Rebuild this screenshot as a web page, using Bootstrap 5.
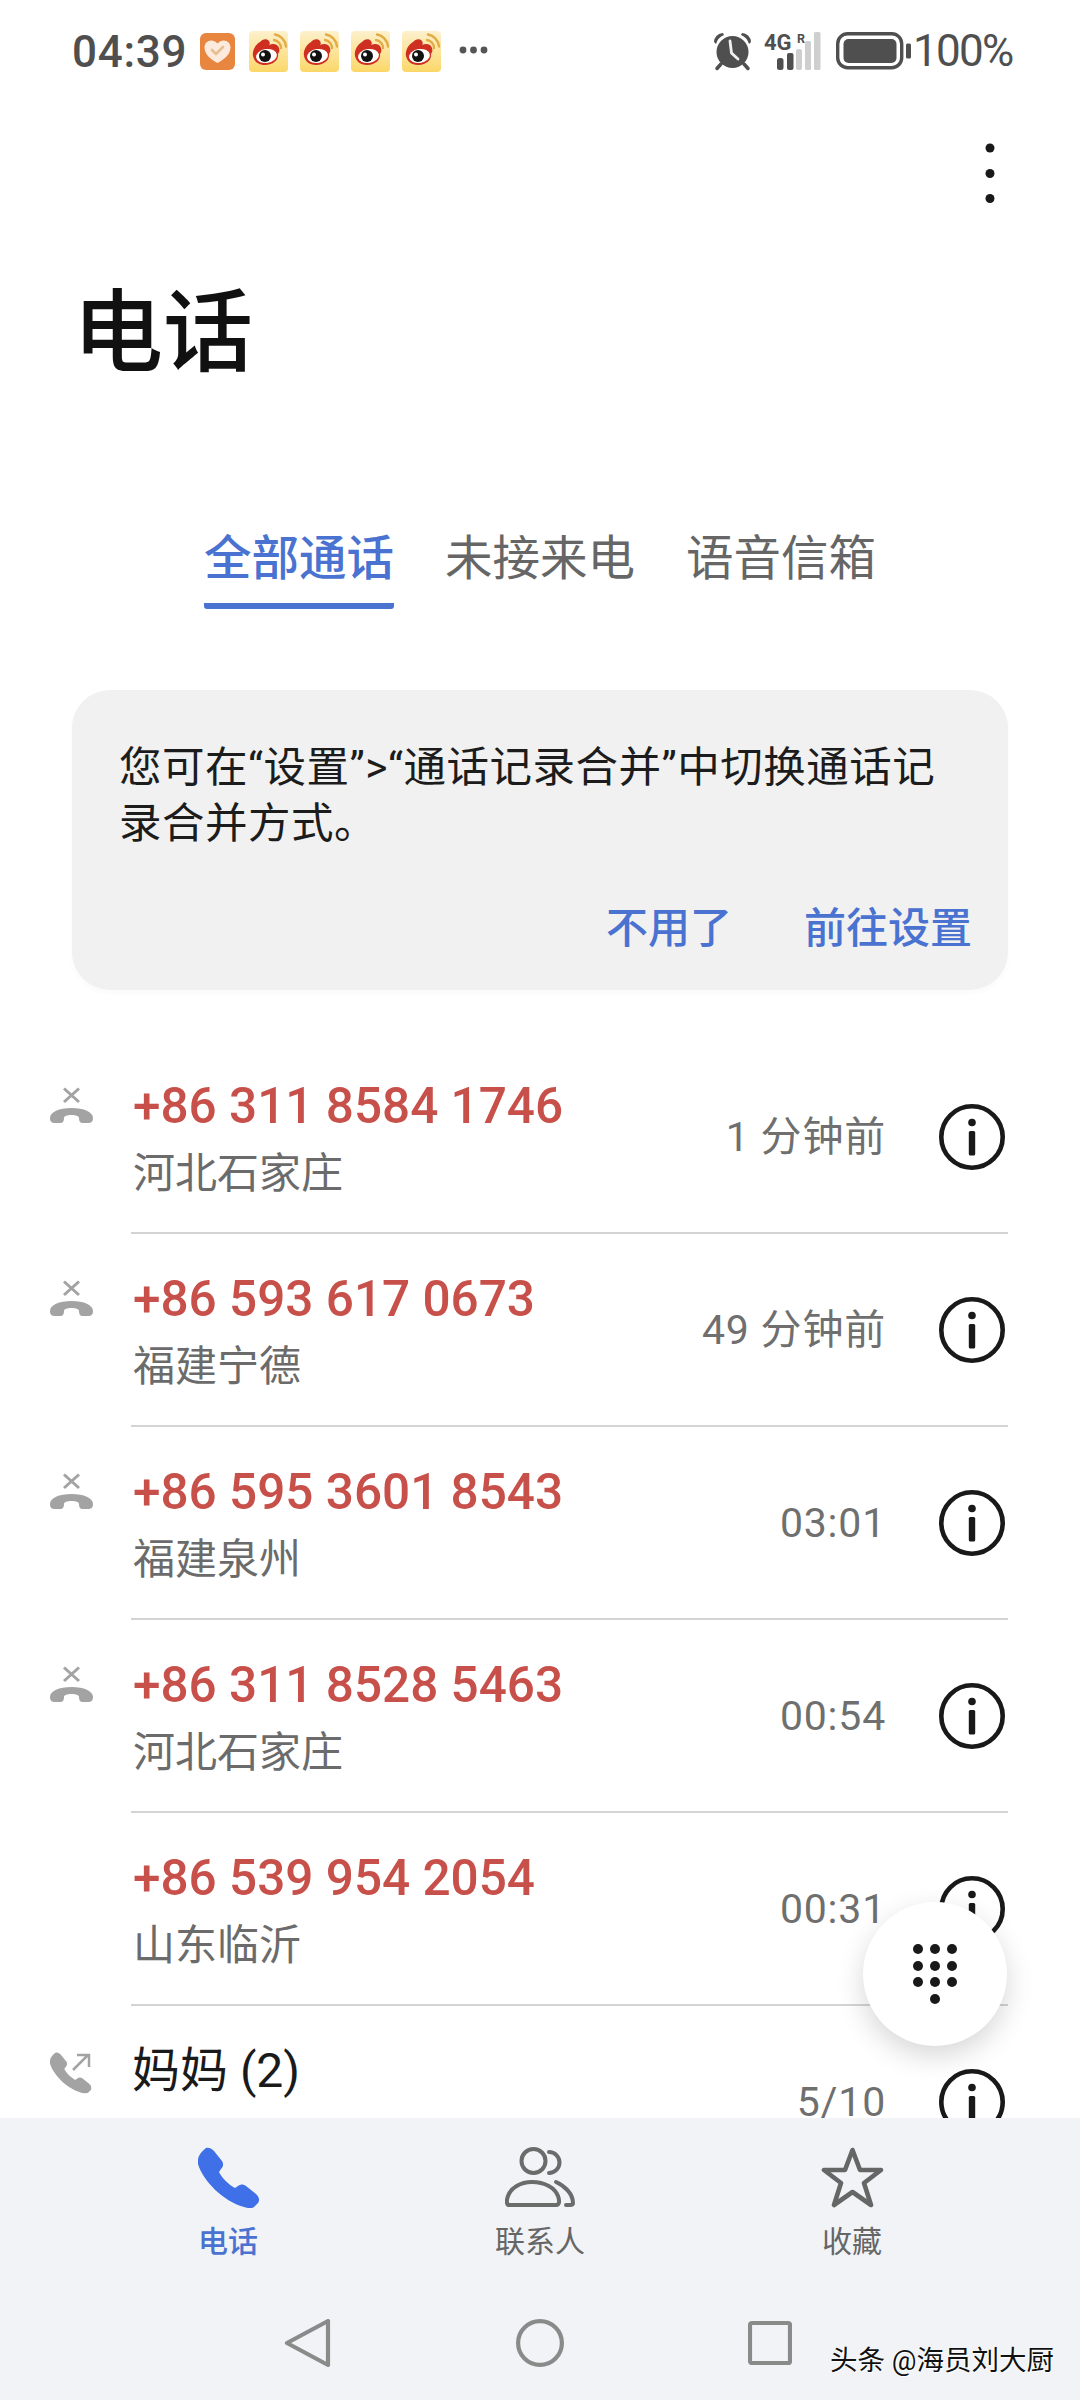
<!DOCTYPE html>
<html lang="zh-CN">
<head>
<meta charset="utf-8">
<title>电话</title>
<link href="https://cdn.jsdelivr.net/npm/bootstrap@5.3.0/dist/css/bootstrap.min.css" rel="stylesheet">
<style>
html,body{margin:0;background:#fff}
body{font-family:Roboto,"Noto Sans CJK SC",sans-serif;color:#191919}
.phone-root{width:1080px;height:2400px;overflow:hidden;position:relative;background:#fff}
.status-row{height:100px;padding:31px 66px 0 72px;color:#4f4f4f}
.clock-text{font-size:44px;font-weight:500;line-height:42px;width:127px;letter-spacing:.7px}
.heart-ico{margin-top:2px;margin-right:12px}
.weibo-ico{margin-right:10px}
.more-dots{margin-left:7px;margin-top:15px}
.alarm-ico{margin-right:13px;margin-top:1px}
.signal-ico{margin-right:15px;margin-top:1px;overflow:visible}
.batt-ico{margin-right:6px;margin-top:1px}
.pct-text{font-size:44px;line-height:41px;letter-spacing:-1.7px;font-weight:400;width:98px;margin-left:-5px;margin-right:3px;white-space:nowrap}
.menu-row{height:148px;padding-right:85px}
.menu-dots{margin-top:43px}
.page-title{height:170px;line-height:172px;font-size:90px;font-weight:500;padding-left:73px;color:#111}
.tab-row{gap:51px;margin-top:106px}
.tab-item{font-size:47.500px;line-height:70px;color:#666;padding-bottom:9px;border-bottom:6px solid transparent;width:190px;text-align:center;white-space:nowrap}
.tab-item.is-on{color:#4a72d0;font-weight:500;border-bottom-color:#4a72d0;border-radius:0 0 3px 3px}
.tip-card{margin:81px 72px 0;height:300px;background:#f1f1f1;border-radius:38px;padding:50px 36px 0 47px;box-shadow:0 3px 6px rgba(0,0,0,.025)}
.tip-text{font-size:42.500px;line-height:56px;color:#1c1c1c;letter-spacing:.5px;white-space:nowrap}
.tip-actions{gap:72px;margin-top:49px}
.tip-link{font-size:42px;line-height:56px;color:#4a72d0;white-space:nowrap;font-weight:500}
.call-list{margin-top:51px;flex:1 1 0;min-height:0;overflow:hidden}
.call-row{height:193px}
.call-ico{width:131px;flex:none;padding:46px 0 0 50px}
.call-body{flex:1 1 auto;height:193px;border-bottom:2px solid #d4d4d4;margin-right:72px;padding-top:31px}
.call-main{flex:1 1 auto;padding-left:2px}
.call-num{font-size:49.500px;line-height:68px;font-weight:500;color:#c8504a;white-space:nowrap}
.call-name{font-size:48px;line-height:68px;font-weight:400;color:#1a1a1a;white-space:nowrap;margin-left:-1px}
.call-place{font-size:42px;line-height:68px;color:#6b6b6b;white-space:nowrap}
.call-time{font-size:41px;line-height:50px;color:#6f6f6f;white-space:nowrap;letter-spacing:.8px;margin-right:53px;margin-top:40px}
.info-ico{flex:none;margin-top:32px;margin-right:3px}
.dial-fab{position:absolute;left:863px;top:1902px;width:144px;height:144px;border-radius:50%;background:#fff;box-shadow:0 10px 28px rgba(0,0,0,.16)}
.bottom-bar{height:282px;flex:none;background:#f1f3f6}
.bar-tabs{padding:29px 72px 0}
.bar-tab{width:312px}
.bar-label{font-size:30px;line-height:40px;margin-top:14px;color:#666}
.bar-label.is-on{color:#4a72d0;font-weight:500}
.nav-keys{gap:184px;margin-top:57px;padding-right:4px}
.watermark{position:absolute;left:830px;top:2344px;font-size:27.500px;line-height:34px;color:#111;text-shadow:1px 1px 0 #fff,-1px 0 0 #fff;white-space:nowrap}
</style>
</head>
<body>
<svg width="0" height="0" class="position-absolute">
<defs>
<linearGradient id="wbg" x1="0" y1="0" x2="0" y2="1"><stop offset="0" stop-color="#fdf1cd"/><stop offset="1" stop-color="#fbd769"/></linearGradient>
<symbol id="weibo" viewBox="0 0 39 41">
<rect width="39" height="41" rx="4" fill="url(#wbg)"/>
<path d="M25 9A8 8 0 0 1 32 17M26 3.500A13.500 13.500 0 0 1 37 15.500" fill="none" stroke="#e2ab45" stroke-width="2.400" stroke-linecap="round"/>
<path d="M4 25C3 19 7 13 11 11C13 8 18 7 20 10C21 12 21 13 20 14C24 12 29 13 30 17C31 20 30 21 29 23C30 28 25 34 16 34C9 34 5 30 4 25Z" fill="#cf2f20"/>
<ellipse cx="17.500" cy="25" rx="10.500" ry="7" fill="#fff" transform="rotate(-8 17.500 25)"/>
<circle cx="16" cy="25" r="6" fill="#111"/>
<circle cx="14" cy="23.500" r="2" fill="#fff"/>
</symbol>
<symbol id="handset" viewBox="0 0 61 61">
<path d="M8 1C11 0 14 2 16 4L24 14C26 17 25 20 23 22L21 25C24 31 30 37 37 41L40 39C43 37 45 37 48 39L58 47C61 50 62 53 60 56L56 60C53 62 49 61 46 60C25 54 5 34 0 17C-1 12 1 6 8 1Z"/>
</symbol>
<symbol id="missed" viewBox="0 0 43 36">
<path d="M14 1.500L29 15M29 1.500L14 15" stroke="#a3a3a3" stroke-width="3" fill="none"/>
<path d="M0 31C0 25 9 21 21.500 21C34 21 43 25 43 31C43 35 41 36 38 36L33 36C30 36 29 34 29 31C29 29 26 28 21.500 28C17 28 14 29 14 31C14 34 13 36 10 36L5 36C2 36 0 35 0 31Z" fill="#a3a3a3"/>
</symbol>
<symbol id="info" viewBox="0 0 66 66">
<circle cx="33" cy="33" r="30.700" fill="none" stroke="#191919" stroke-width="4.600"/>
<circle cx="33" cy="18.500" r="3.800" fill="#191919"/>
<rect x="29.800" y="27" width="6.400" height="24.500" rx="1.500" fill="#191919"/>
</symbol>
</defs>
</svg>
<div class="phone-root d-flex flex-column">

  <div class="status-row d-flex justify-content-between flex-none">
    <div class="d-flex align-items-start">
      <div class="clock-text">04:39</div>
      <svg class="heart-ico" width="37" height="37" viewBox="0 0 35 37"><rect width="35" height="37" rx="6" fill="#e8853f"/><path d="M17.500 30C10 26 4.500 21 4.500 14.500C4.500 10 8 7 12 7.500C14.500 7.800 16 9 17.500 10.500C19 9 20.500 7.800 23 7.500C27 7 30.500 10 30.500 14.500C30.500 21 25 26 17.500 30Z" fill="#fcebdc"/><path d="M12 17L16 21L23 14" fill="none" stroke="#e6bf92" stroke-width="2.600" stroke-linecap="round" stroke-linejoin="round"/></svg>
      <svg class="weibo-ico" width="41" height="41"><use href="#weibo"/></svg>
      <svg class="weibo-ico" width="41" height="41"><use href="#weibo"/></svg>
      <svg class="weibo-ico" width="41" height="41"><use href="#weibo"/></svg>
      <svg class="weibo-ico" width="41" height="41"><use href="#weibo"/></svg>
      <svg class="more-dots" width="29" height="8" viewBox="0 0 29 8"><circle cx="4" cy="4" r="3.400" fill="#555"/><circle cx="14.500" cy="4" r="3.400" fill="#555"/><circle cx="25" cy="4" r="3.400" fill="#555"/></svg>
    </div>
    <div class="d-flex align-items-start">
      <svg class="alarm-ico" width="38" height="39" viewBox="0 0 38 39" fill="#4f4f4f">
        <circle cx="19.500" cy="20" r="16"/>
        <path d="M1 10A9 9 0 0 1 10 1L11 3A14 14 0 0 0 3 12ZM38 10A9 9 0 0 0 29 1L28 3A14 14 0 0 1 36 12Z"/>
        <path d="M8 32L4 36.500M31 32L35 36.500" stroke="#4f4f4f" stroke-width="3.500" stroke-linecap="round"/>
        <path d="M17 9L18.500 21L25 27" fill="none" stroke="#f0f0f0" stroke-width="2.800" stroke-linecap="round"/>
      </svg>
      <svg class="signal-ico" width="57" height="38" viewBox="0 0 57 38" fill="#4f4f4f">
        <text x="0" y="18" font-family="Roboto" font-weight="700" font-size="22">4G</text>
        <text x="33" y="10.500" font-family="Roboto" font-weight="700" font-size="12.500">R</text>
        <rect x="13" y="26" width="6.500" height="12" rx="2.500"/>
        <rect x="23" y="21" width="6.500" height="17" rx="2"/>
        <g fill="#cfcfcf"><rect x="32" y="17" width="6" height="21" rx="2"/><rect x="41" y="9" width="6" height="29" rx="1.500"/><rect x="50" y="0" width="6.500" height="38" rx="1.500"/></g>
      </svg>
      <svg class="batt-ico" width="76" height="38" viewBox="0 0 76 38">
        <rect x="1.700" y="1.700" width="64" height="34" rx="10" fill="none" stroke="#4f4f4f" stroke-width="3.400"/>
        <rect x="7.500" y="7" width="53" height="24" rx="5" fill="#4f4f4f"/>
        <rect x="70" y="11.500" width="5" height="15" rx="1.500" fill="#4f4f4f"/>
      </svg>
      <div class="pct-text">100%</div>
    </div>
  </div>

  <div class="menu-row d-flex justify-content-end flex-none">
    <svg class="menu-dots" width="10" height="60" viewBox="0 0 10 60" fill="#191919"><circle cx="5" cy="5" r="4.500"/><circle cx="5" cy="30.500" r="4.500"/><circle cx="5" cy="55.500" r="4.500"/></svg>
  </div>

  <div class="page-title flex-none">电话</div>

  <div class="tab-row d-flex justify-content-center flex-none">
    <div class="tab-item is-on">全部通话</div>
    <div class="tab-item">未接来电</div>
    <div class="tab-item">语音信箱</div>
  </div>

  <div class="tip-card flex-none">
    <div class="tip-text">您可在“设置”&gt;“通话记录合并”中切换通话记<br>录合并方式。</div>
    <div class="tip-actions d-flex justify-content-end">
      <div class="tip-link">不用了</div>
      <div class="tip-link">前往设置</div>
    </div>
  </div>

  <div class="call-list">
    <div class="call-row d-flex">
      <div class="call-ico"><svg class="d-block" width="43" height="36"><use href="#missed"/></svg></div>
      <div class="call-body d-flex">
        <div class="call-main"><div class="call-num">+86 311 8584 1746</div><div class="call-place">河北石家庄</div></div>
        <div class="call-time">1 分钟前</div>
        <svg class="info-ico" width="66" height="66"><use href="#info"/></svg>
      </div>
    </div>
    <div class="call-row d-flex">
      <div class="call-ico"><svg class="d-block" width="43" height="36"><use href="#missed"/></svg></div>
      <div class="call-body d-flex">
        <div class="call-main"><div class="call-num">+86 593 617 0673</div><div class="call-place">福建宁德</div></div>
        <div class="call-time">49 分钟前</div>
        <svg class="info-ico" width="66" height="66"><use href="#info"/></svg>
      </div>
    </div>
    <div class="call-row d-flex">
      <div class="call-ico"><svg class="d-block" width="43" height="36"><use href="#missed"/></svg></div>
      <div class="call-body d-flex">
        <div class="call-main"><div class="call-num">+86 595 3601 8543</div><div class="call-place">福建泉州</div></div>
        <div class="call-time">03:01</div>
        <svg class="info-ico" width="66" height="66"><use href="#info"/></svg>
      </div>
    </div>
    <div class="call-row d-flex">
      <div class="call-ico"><svg class="d-block" width="43" height="36"><use href="#missed"/></svg></div>
      <div class="call-body d-flex">
        <div class="call-main"><div class="call-num">+86 311 8528 5463</div><div class="call-place">河北石家庄</div></div>
        <div class="call-time">00:54</div>
        <svg class="info-ico" width="66" height="66"><use href="#info"/></svg>
      </div>
    </div>
    <div class="call-row d-flex">
      <div class="call-ico"></div>
      <div class="call-body d-flex">
        <div class="call-main"><div class="call-num">+86 539 954 2054</div><div class="call-place">山东临沂</div></div>
        <div class="call-time">00:31</div>
        <svg class="info-ico" width="66" height="66"><use href="#info"/></svg>
      </div>
    </div>
    <div class="call-row d-flex">
      <div class="call-ico">
        <svg class="d-block" width="43" height="42" viewBox="0 0 43 42" fill="#a3a3a3"><g transform="scale(.68)"><use href="#handset" width="61" height="61"/></g><path d="M23 18L38 3M27 3H39V15" fill="none" stroke="#a3a3a3" stroke-width="2.500"/></svg>
      </div>
      <div class="call-body d-flex">
        <div class="call-main"><div class="call-name">妈妈 (2)</div></div>
        <div class="call-time">5/10</div>
        <svg class="info-ico" width="66" height="66"><use href="#info"/></svg>
      </div>
    </div>
  </div>

  <div class="bottom-bar">
    <div class="bar-tabs d-flex">
      <div class="bar-tab d-flex flex-column align-items-center">
        <svg width="61" height="61" fill="#3f70e8"><use href="#handset"/></svg>
        <div class="bar-label is-on">电话</div>
      </div>
      <div class="bar-tab d-flex flex-column align-items-center">
        <svg width="70" height="61" viewBox="0 0 70 61" fill="none" stroke="#6b6b6b" stroke-width="4" stroke-linecap="round" stroke-linejoin="round">
          <circle cx="28.500" cy="14" r="12"/>
          <path d="M44 5A10.500 10.500 0 0 1 44 26"/>
          <path d="M4.500 58C1 58 1.500 53 3 49C6 41 15 35 27 35C40 35 50 41 53 49C54.500 53 55 58 51 58Z"/>
          <path d="M51 35C60 39 68 47 68 56Q68 58 65 58H61"/>
        </svg>
        <div class="bar-label">联系人</div>
      </div>
      <div class="bar-tab d-flex flex-column align-items-center">
        <svg width="63" height="61" viewBox="0 0 63 61" fill="none" stroke="#666" stroke-width="4.600" stroke-linejoin="round"><path d="M31.500 3L39 23H60L43 36L50 58L31.500 45L13 58L20 36L3 23H24Z"/></svg>
        <div class="bar-label">收藏</div>
      </div>
    </div>
    <div class="nav-keys d-flex justify-content-center">
      <svg width="48" height="48" viewBox="0 0 48 48" fill="none" stroke="#8a8a8a" stroke-width="4.200" stroke-linejoin="round"><path d="M3 24L44 2V46Z"/></svg>
      <svg width="48" height="48" viewBox="0 0 48 48" fill="none" stroke="#8a8a8a" stroke-width="4.200"><circle cx="24" cy="24" r="21.900"/></svg>
      <svg width="44" height="48" viewBox="0 0 44 48" fill="none" stroke="#8a8a8a" stroke-width="4.200" stroke-linejoin="round"><rect x="2" y="4" width="40" height="40" rx="2"/></svg>
    </div>
  </div>

  <div class="dial-fab d-flex align-items-center justify-content-center">
    <svg width="44" height="60" viewBox="0 0 44 60" fill="#191919">
      <circle cx="5" cy="5" r="5"/><circle cx="22" cy="5" r="5"/><circle cx="39" cy="5" r="5"/>
      <circle cx="5" cy="22" r="5"/><circle cx="22" cy="22" r="5"/><circle cx="39" cy="22" r="5"/>
      <circle cx="5" cy="38" r="5"/><circle cx="22" cy="38" r="5"/><circle cx="39" cy="38" r="5"/>
      <circle cx="22" cy="55" r="5"/>
    </svg>
  </div>

  <div class="watermark">头条 @海员刘大厨</div>
</div>
<script src="https://cdn.jsdelivr.net/npm/bootstrap@5.3.0/dist/js/bootstrap.bundle.min.js"></script>
</body>
</html>
